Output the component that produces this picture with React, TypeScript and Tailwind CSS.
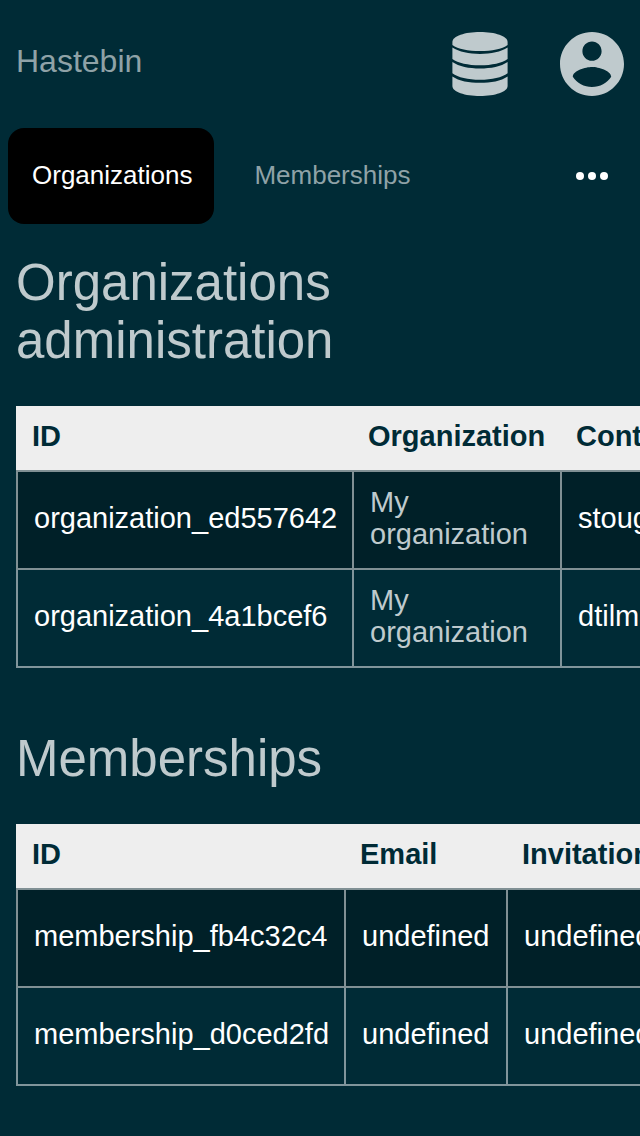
const organizations = [
  { id: 'organization_ed557642', name: 'My organization', contact: 'stough' },
  { id: 'organization_4a1bcef6', name: 'My organization', contact: 'dtilman' },
];

const memberships = [
  { id: 'membership_fb4c32c4', email: 'undefined', invitation: 'undefined' },
  { id: 'membership_d0ced2fd', email: 'undefined', invitation: 'undefined' },
];

const heading = 'mb-9 max-w-[480px] text-[51px] leading-[58px] text-[#bfcacd]';
const scroller = '-mr-4 overflow-x-auto [scrollbar-width:none]';
const table = 'border-separate border-spacing-0 text-left text-[29px] leading-8';
const th = 'bg-[#eeeeee] pt-3.5 pr-3 pb-4.5 pl-4 font-bold text-[#002b36]';
const td = 'h-[98px] border-b-2 border-l-2 border-white/50 pt-3.5 pr-3 pb-4.5 pl-4 align-middle';
const row = 'bg-[#002b36] first:bg-[#002028] first:[&>td]:h-[100px] first:[&>td]:border-t-2';

function DatabaseIcon() {
  return (
    <svg viewBox="0 0 56 64" className="h-16 w-14" fill="currentColor" aria-hidden="true">
      <path d="M28 0C43 0 55.6 4 55.6 10V13C50 17 40 19 28 19S6 17 .4 13V10C.4 4 13 0 28 0Z" />
      <path d="M.4 15.6C7 20 17 22 28 22S49 20 55.6 15.6V27C50 31 40 33.3 28 33.3S6 31 .4 27Z" />
      <path d="M.4 30C7 34.5 17 36.5 28 36.5S49 34.5 55.6 30V41.2C50 45.5 40 47.7 28 47.7S6 45.5 .4 41.2Z" />
      <path d="M.4 44.4C7 49 17 50.8 28 50.8S49 49 55.6 44.4V54C55.6 60 43 64 28 64S.4 60 .4 54Z" />
    </svg>
  );
}

function AccountIcon() {
  return (
    <svg viewBox="2 2 20 20" className="size-16" fill="currentColor" aria-hidden="true">
      <path d="M12 2C6.48 2 2 6.48 2 12s4.48 10 10 10 10-4.48 10-10S17.52 2 12 2zm0 3c1.66 0 3 1.34 3 3s-1.34 3-3 3-3-1.34-3-3 1.34-3 3-3zm0 14.2c-2.5 0-4.71-1.28-6-3.22.03-1.99 4-3.08 6-3.08 1.99 0 5.97 1.09 6 3.08-1.29 1.94-3.5 3.22-6 3.22z" />
    </svg>
  );
}

export default function App() {
  return (
    <div className="min-h-screen overflow-x-hidden bg-[#002b36] pb-12 font-['Liberation_Sans',Arial,sans-serif] text-white">
      <header className="flex h-32 items-center justify-between px-4 text-[#bfcacd]">
        <a href="#home" className="pb-1.5 text-[32px] leading-10 text-[#8fa2a7]">
          Hastebin
        </a>
        <div className="flex gap-13">
          <button type="button" aria-label="Database">
            <DatabaseIcon />
          </button>
          <button type="button" aria-label="Account">
            <AccountIcon />
          </button>
        </div>
      </header>

      <nav className="flex items-center px-2 text-[26px]">
        <a href="#organizations" className="flex h-24 items-center rounded-2xl bg-black pr-5.5 pb-0.5 pl-6">
          Organizations
        </a>
        <a href="#memberships" className="ml-4 flex h-24 items-center pr-5.5 pb-0.5 pl-6 text-[#8fa2a7]">
          Memberships
        </a>
        <button type="button" aria-label="More" className="ml-auto flex h-24 items-center px-6">
          <svg viewBox="0 0 32 8" className="h-2 w-8" fill="currentColor" aria-hidden="true">
            <circle cx="4" cy="4" r="4" />
            <circle cx="16" cy="4" r="4" />
            <circle cx="28" cy="4" r="4" />
          </svg>
        </button>
      </nav>

      <main className="px-4 pt-[30px]">
        <section>
          <h1 className={heading}>Organizations administration</h1>
          <div className={scroller}>
            <table className={table}>
              <thead>
                <tr>
                  <th className={`${th} min-w-[336px]`}>ID</th>
                  <th className={`${th} min-w-[208px]`}>Organization</th>
                  <th className={`${th} min-w-[240px]`}>Contact</th>
                </tr>
              </thead>
              <tbody>
                {organizations.map((o) => (
                  <tr key={o.id} className={row}>
                    <td className={td}>{o.id}</td>
                    <td className={`${td} max-w-[208px] text-[#bfcacd]`}>{o.name}</td>
                    <td className={td}>{o.contact}</td>
                  </tr>
                ))}
              </tbody>
            </table>
          </div>
        </section>

        <section className="mt-[62px]">
          <h2 className={heading}>Memberships</h2>
          <div className={scroller}>
            <table className={table}>
              <thead>
                <tr>
                  <th className={`${th} min-w-[328px]`}>ID</th>
                  <th className={`${th} min-w-[162px]`}>Email</th>
                  <th className={`${th} min-w-[240px]`}>Invitation</th>
                </tr>
              </thead>
              <tbody>
                {memberships.map((m) => (
                  <tr key={m.id} className={row}>
                    <td className={td}>{m.id}</td>
                    <td className={td}>{m.email}</td>
                    <td className={td}>{m.invitation}</td>
                  </tr>
                ))}
              </tbody>
            </table>
          </div>
        </section>
      </main>
    </div>
  );
}
